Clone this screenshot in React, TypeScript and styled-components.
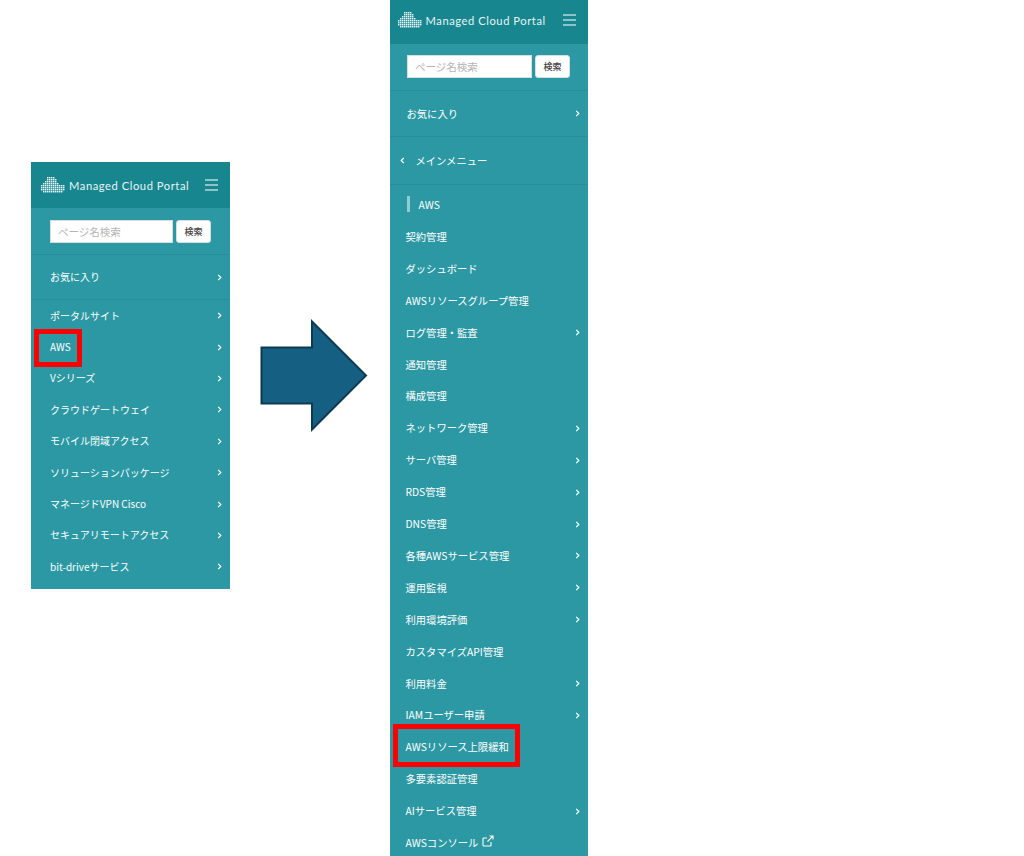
import { FC } from 'react';
import styled, { createGlobalStyle } from 'styled-components';

const GlobalStyle = createGlobalStyle`
  html, body {
    margin: 0;
    padding: 0;
    background: #fff;
  }
  body {
    font-family: "Lato", "Noto Sans CJK JP", sans-serif;
  }
`;

interface MenuEntry {
  label: string;
  arrow?: boolean;
  marked?: boolean;
  external?: boolean;
}

type Side = 'left' | 'right';

const leftItems: MenuEntry[] = [
  { label: 'ポータルサイト', arrow: true },
  { label: 'AWS', arrow: true, marked: true },
  { label: 'Vシリーズ', arrow: true },
  { label: 'クラウドゲートウェイ', arrow: true },
  { label: 'モバイル閉域アクセス', arrow: true },
  { label: 'ソリューションパッケージ', arrow: true },
  { label: 'マネージドVPN Cisco', arrow: true },
  { label: 'セキュアリモートアクセス', arrow: true },
  { label: 'bit-driveサービス', arrow: true },
];

const rightItems: MenuEntry[] = [
  { label: '契約管理' },
  { label: 'ダッシュボード' },
  { label: 'AWSリソースグループ管理' },
  { label: 'ログ管理・監査', arrow: true },
  { label: '通知管理' },
  { label: '構成管理' },
  { label: 'ネットワーク管理', arrow: true },
  { label: 'サーバ管理', arrow: true },
  { label: 'RDS管理', arrow: true },
  { label: 'DNS管理', arrow: true },
  { label: '各種AWSサービス管理', arrow: true },
  { label: '運用監視', arrow: true },
  { label: '利用環境評価', arrow: true },
  { label: 'カスタマイズAPI管理' },
  { label: '利用料金', arrow: true },
  { label: 'IAMユーザー申請', arrow: true },
  { label: 'AWSリソース上限緩和', marked: true },
  { label: '多要素認証管理' },
  { label: 'AIサービス管理', arrow: true },
  { label: 'AWSコンソール', external: true },
];

// first and last dot column of each row of the cloud
const LOGO_ROWS: [number, number][] = [
  [3, 6],
  [3, 7],
  [2, 7],
  [1, 8],
  [0, 11],
  [0, 11],
  [0, 11],
  [1, 10],
];

const CloudLogo: FC = () => (
  <svg width="24" height="16" viewBox="0 0 24 16" fill="#e8f4f5">
    {LOGO_ROWS.map(([from, to], row) =>
      Array.from({ length: to - from + 1 }).map((_, i) => (
        <rect key={`${row}-${i}`} x={(from + i) * 2} y={row * 2} width="1.45" height="1.45" />
      )),
    )}
  </svg>
);

const Chevron: FC<{ left?: boolean }> = ({ left }) => (
  <svg width="5" height="7" viewBox="0 0 5 7" fill="none" stroke="#fff" strokeWidth="1.2">
    <path d={left ? 'M3.8 .8 1.2 3.5 3.8 6.2' : 'M1.2 .8 3.8 3.5 1.2 6.2'} />
  </svg>
);

const ExternalIcon: FC = () => (
  <ExternalSvg width="12" height="12" viewBox="0 0 12 12" fill="none" stroke="#fff" strokeWidth="1.1">
    <path d="M9 7v3.2a.8.8 0 0 1-.8.8H1.8a.8.8 0 0 1-.8-.8V3.8a.8.8 0 0 1 .8-.8H5" />
    <path d="M7.5 1H11v3.5M11 1 5.5 6.5" />
  </ExternalSvg>
);

const SidebarTop: FC<{ tall?: boolean }> = ({ tall }) => (
  <>
    <Header $tall={tall}>
      <LogoMark>
        <CloudLogo />
        <LogoText>Managed Cloud Portal</LogoText>
      </LogoMark>
      <Burger>
        <span />
        <span />
        <span />
      </Burger>
    </Header>
    <SearchRow $tall={tall}>
      <SearchInput placeholder="ページ名検索" readOnly />
      <SearchButton>検索</SearchButton>
    </SearchRow>
    <FavRow $tall={tall}>
      <RowLabel>お気に入り</RowLabel>
      <Chevron />
    </FavRow>
  </>
);

const Row: FC<{ item: MenuEntry; side: Side }> = ({ item, side }) => (
  <MenuRow $side={side}>
    <RowLabel $marked={item.marked} $side={side}>
      {item.label}
      {item.external && <ExternalIcon />}
    </RowLabel>
    {item.arrow && <Chevron />}
  </MenuRow>
);

const App: FC = () => (
  <Page>
    <GlobalStyle />
    <LeftSidebar>
      <SidebarTop />
      <nav>
        {leftItems.map(item => (
          <Row key={item.label} item={item} side="left" />
        ))}
      </nav>
    </LeftSidebar>
    <BigArrow width="108" height="113" viewBox="0 0 108 113">
      <path
        d="M1.5 28.5H52V2.5L106 56.5 52 110.5V84.5H1.5Z"
        fill="#156082"
        stroke="#0c3a50"
        strokeWidth="2"
      />
    </BigArrow>
    <RightSidebar>
      <SidebarTop tall />
      <BackRow>
        <Chevron left />
        <RowLabel>メインメニュー</RowLabel>
      </BackRow>
      <SectionTitle>AWS</SectionTitle>
      <nav>
        {rightItems.map(item => (
          <Row key={item.label} item={item} side="right" />
        ))}
      </nav>
    </RightSidebar>
  </Page>
);

export default App;

const Page = styled.div`
  width: 1024px;
  height: 856px;
  overflow: hidden;
  display: flex;
  align-items: flex-start;
  background: #fff;
`;

const LeftSidebar = styled.aside`
  width: 199px;
  height: 427px;
  margin: 162px 0 0 31px;
  background: #2c98a3;
  color: #fff;
  font-size: 10px;
`;

const RightSidebar = styled.aside`
  width: 198.5px;
  height: 856px;
  margin-left: 21.5px;
  background: #2c98a3;
  color: #fff;
  font-size: 10.3px;
  overflow: hidden;
`;

const BigArrow = styled.svg`
  flex: none;
  margin: 319px 0 0 30px;
`;

const Header = styled.header<{ $tall?: boolean }>`
  height: ${p => (p.$tall ? 44 : 46)}px;
  box-sizing: border-box;
  background: #17868f;
  display: flex;
  align-items: center;
  justify-content: space-between;
  padding: 0 12px ${p => (p.$tall ? 4 : 0)}px ${p => (p.$tall ? 8 : 10)}px;
`;

const LogoMark = styled.div`
  display: flex;
  align-items: center;
  gap: 4px;
`;

const LogoText = styled.span`
  font-family: "Lato", sans-serif;
  font-size: 11.2px;
  letter-spacing: 0.55px;
  color: #e8f4f5;
  white-space: nowrap;
`;

const Burger = styled.div`
  display: flex;
  flex-direction: column;
  gap: 3.5px;
  width: 13px;

  span {
    height: 1.5px;
    background: #8cc4ca;
  }
`;

const SearchRow = styled.div<{ $tall?: boolean }>`
  display: flex;
  gap: 3px;
  padding: ${p => (p.$tall ? '11px 18px 12px 17.5px' : '12px 19px 11px')};
  border-bottom: 1px solid #2a8d97;
`;

const SearchInput = styled.input`
  flex: 1;
  min-width: 0;
  height: 23px;
  box-sizing: border-box;
  border: 1px solid #d8dfe0;
  background: #fff;
  padding: 0 7px;
  font-family: "Noto Sans CJK JP", sans-serif;
  font-size: 10.5px;
  outline: none;

  &::placeholder {
    color: #b4b4b4;
  }
`;

const SearchButton = styled.button`
  width: 35px;
  height: 23px;
  padding: 0;
  border: 1px solid #d8dfe0;
  border-radius: 3px;
  background: #fff;
  color: #444;
  font-family: "Noto Sans CJK JP", sans-serif;
  font-size: 9px;
  font-weight: 500;
`;

const FavRow = styled.div<{ $tall?: boolean }>`
  height: ${p => (p.$tall ? 45 : 44)}px;
  display: flex;
  align-items: center;
  justify-content: space-between;
  padding: 0 8px 0 ${p => (p.$tall ? 17 : 19)}px;
  border-bottom: 1px solid #2a8d97;
`;

const RowLabel = styled.span<{ $marked?: boolean; $side?: Side }>`
  position: relative;
  display: inline-flex;
  align-items: center;
  gap: 4px;
  font-family: "Noto Sans CJK JP", sans-serif;
  font-weight: 400;
  line-height: 16px;
  white-space: nowrap;

  ${p =>
    p.$marked &&
    `&::after {
      content: '';
      position: absolute;
      border: 5px solid #f00;
      ${
        p.$side === 'left'
          ? 'left: -16px; right: -11px; top: -10px; bottom: -12px;'
          : 'left: -13px; right: -11px; top: -15px; bottom: -12px;'
      }
    }`}
`;

const MenuRow = styled.div<{ $side: Side }>`
  height: ${p => (p.$side === 'left' ? 31.4 : 31.9)}px;
  display: flex;
  align-items: center;
  justify-content: space-between;
  padding: 0 8px 0 ${p => (p.$side === 'left' ? 19 : 16)}px;
`;

const BackRow = styled.div`
  height: 47px;
  display: flex;
  align-items: center;
  gap: 11px;
  padding-left: 10px;
  border-bottom: 1px solid #2a8d97;
`;

const SectionTitle = styled.div`
  height: 33.6px;
  margin-top: 2.5px;
  display: flex;
  align-items: center;
  padding-left: 17px;
  font-family: "Noto Sans CJK JP", sans-serif;

  &::before {
    content: '';
    width: 3px;
    height: 16px;
    margin-right: 9px;
    background: #8fcdd3;
  }
`;

const ExternalSvg = styled.svg`
  margin-top: -4px;
`;
